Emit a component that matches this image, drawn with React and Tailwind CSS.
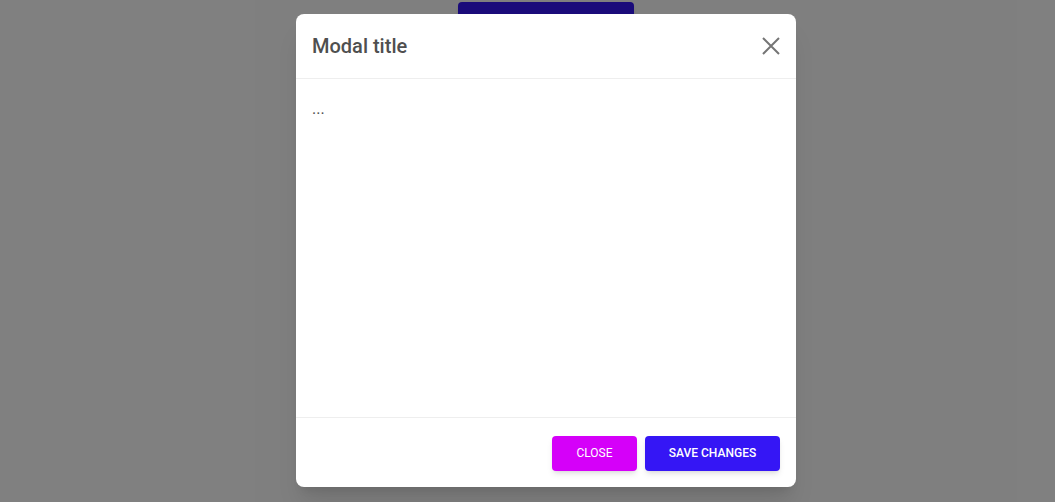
export default function App() {
  return (
    <div className="relative h-[502px] w-[1055px] overflow-hidden bg-white" style={{ fontFamily: 'Roboto, "Liberation Sans", sans-serif' }}>
      <button className="ml-[458px] mt-[2px] h-[36px] w-[176px] rounded bg-[#3516f5] text-xs font-medium uppercase text-white shadow-md">
        Launch demo modal
      </button>

      <div className="absolute inset-0 bg-black/50">
        <div className="ml-[296px] mt-[14px] flex h-[473px] w-[500px] flex-col rounded-lg bg-white shadow-xl">
          <div className="flex h-[65px] items-center justify-between border-b border-[#eeeeee] pl-4 pr-[13px]">
            <h5 className="text-xl font-medium text-[#4f4f4f]">Modal title</h5>
            <button className="flex h-6 w-6 items-center justify-center text-[#757575]">
              <svg width="20" height="20" viewBox="0 0 20 20" fill="none" stroke="currentColor" strokeWidth="2">
                <path d="M2 2L18 18M18 2L2 18" />
              </svg>
            </button>
          </div>
          <div className="flex-1 px-4 pt-[18px] text-base text-[#4f4f4f]">...</div>
          <div className="flex h-[70px] items-center justify-end gap-2 border-t border-[#eeeeee] px-4 pt-px">
            <button className="h-[35px] w-[85px] rounded bg-[#d500f9] text-xs font-normal uppercase text-white shadow-md">
              Close
            </button>
            <button className="h-[35px] w-[135px] rounded bg-[#3516f5] text-xs font-medium uppercase text-white shadow-md">
              Save changes
            </button>
          </div>
        </div>
      </div>
    </div>
  );
}
